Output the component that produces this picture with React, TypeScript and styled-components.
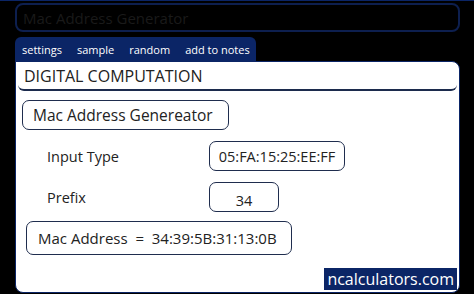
import React from 'react';
import styled, { createGlobalStyle } from 'styled-components';

const navy = '#0b2566';

const GlobalStyle = createGlobalStyle`
  body {
    margin: 0;
    background: #000;
    font-family: 'Open Sans', 'DejaVu Sans', sans-serif;
  }
`;

const Page = styled.div`
  width: 474px;
  height: 294px;
  padding: 2px 14px 0 15px;
  box-sizing: border-box;
  background: #000;
  border-top: 1px solid ${navy};
`;

const TitleBar = styled.div`
  height: 29px;
  box-sizing: border-box;
  border: 2px solid #0d1f4f;
  border-radius: 8px;
  padding: 0 6px;
  display: flex;
  align-items: center;
  font-size: 15px;
  color: #1a1a1a;
`;

const Tabs = styled.div`
  display: flex;
  margin-top: 5px;
  height: 24px;
`;

const TabGroup = styled.div`
  display: flex;
  align-items: center;
  background: ${navy};
  border-radius: 6px 6px 0 0;
  padding: 0 6px 0 7px;
  gap: 15px;
`;

const Tab = styled.span`
  color: #fff;
  font-size: 11px;
`;

const Panel = styled.div`
  background: #fff;
  border: 1px solid ${navy};
  border-radius: 0 8px 8px 8px;
  height: 232px;
  box-sizing: border-box;
  padding: 3px 2px 0 2px;
  display: flex;
  flex-direction: column;
  color: #222;
`;

const SectionTitle = styled.div`
  font-size: 16px;
  padding: 0 0 2px 6px;
  border-bottom: 2px solid #1c2b4d;
  border-radius: 0 0 6px 6px;
`;

const Box = styled.div<{ w: number }>`
  width: ${p => p.w}px;
  height: 30px;
  box-sizing: border-box;
  border: 1.5px solid #1f2d4e;
  border-radius: 7px;
  display: flex;
  align-items: center;
`;

const Heading = styled(Box)`
  margin: 9px 0 0 4px;
  padding-left: 10px;
  font-size: 15.5px;
`;

const Row = styled.div`
  display: flex;
  align-items: center;
  margin-top: 11px;
`;

const Label = styled.div`
  width: 162px;
  padding-left: 29px;
  font-size: 14.5px;
`;

const Field = styled(Box)<{ center?: boolean }>`
  justify-content: center;
  font-size: 14.5px;
  padding-top: ${p => (p.center ? '6px' : '0')};
`;

const Result = styled(Box)`
  margin: 9px 0 0 8px;
  height: 34px;
  padding-left: 11px;
  font-size: 15px;
  white-space: pre;
`;

const Footer = styled.div`
  margin-top: auto;
  margin-bottom: 2px;
  align-self: flex-end;
  background: ${navy};
  color: #fff;
  font-size: 16px;
  padding: 0 3px;
  height: 22px;
  display: flex;
  align-items: center;
`;

export default function App() {
  return (
    <>
      <GlobalStyle />
      <Page>
        <TitleBar>Mac Address Generator</TitleBar>
        <Tabs>
          <TabGroup>
            <Tab>settings</Tab>
            <Tab>sample</Tab>
            <Tab>random</Tab>
            <Tab>add to notes</Tab>
          </TabGroup>
        </Tabs>
        <Panel>
          <SectionTitle>DIGITAL COMPUTATION</SectionTitle>
          <Heading w={207}>Mac Address Genereator</Heading>
          <Row>
            <Label>Input Type</Label>
            <Field w={136}>05:FA:15:25:EE:FF</Field>
          </Row>
          <Row>
            <Label>Prefix</Label>
            <Field w={70} center>34</Field>
          </Row>
          <Result w={266}>Mac Address  =  34:39:5B:31:13:0B</Result>
          <Footer>ncalculators.com</Footer>
        </Panel>
      </Page>
    </>
  );
}
